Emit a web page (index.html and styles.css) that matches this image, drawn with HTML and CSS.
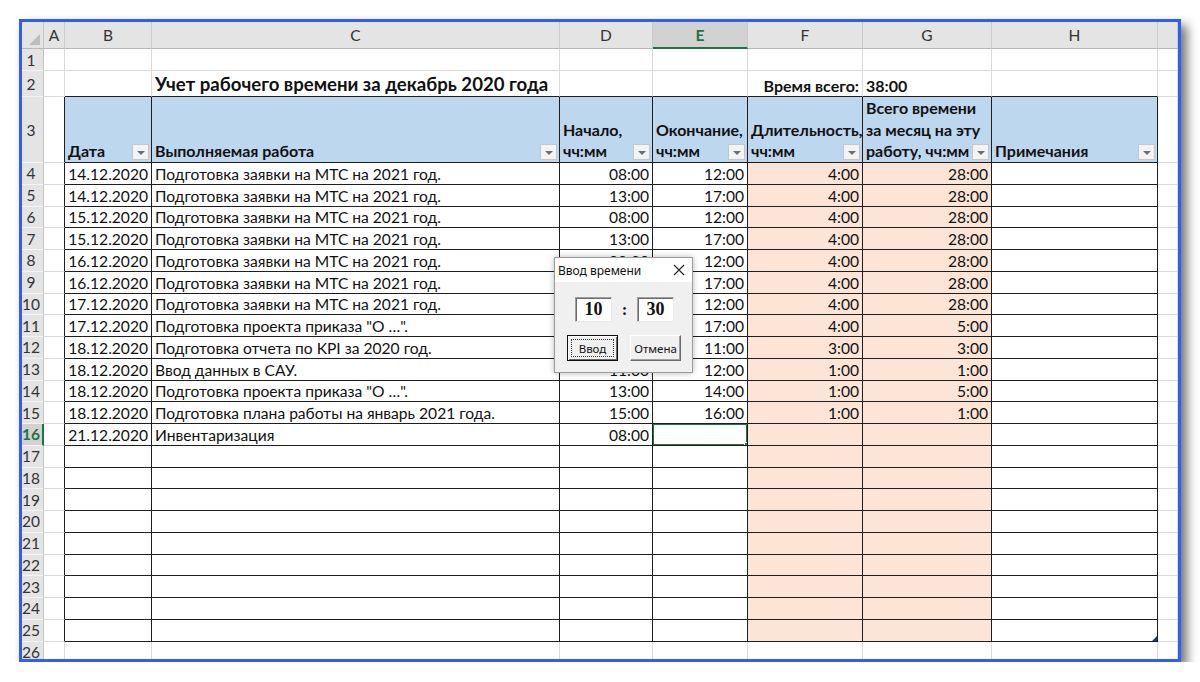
FILE: index.html
```html
<!DOCTYPE html>
<html lang="ru">
<head>
<meta charset="utf-8">
<title>Учет рабочего времени</title>
<link rel="stylesheet" href="styles.css">
</head>
<body>
<div class="frame">
<table class="sheet">
<colgroup>
<col class="c-rh"><col class="c-a"><col class="c-b"><col class="c-c"><col class="c-d"><col class="c-e"><col class="c-f"><col class="c-g"><col class="c-h"><col class="c-i">
</colgroup>
<tr class="r-head">
<th class="corner"><span class="corner-tri"></span></th><th>A</th><th>B</th><th>C</th><th>D</th><th class="sel">E</th><th>F</th><th>G</th><th>H</th><th></th>
</tr>
<tr class="r1"><td class="rh">1</td><td></td><td></td><td></td><td></td><td></td><td></td><td></td><td></td><td></td></tr>
<tr class="r2"><td class="rh">2</td><td></td><td class="bb"></td><td class="bb title">Учет рабочего времени за декабрь 2020 года</td><td class="bb"></td><td class="bb"></td><td class="bb bold right">Время всего:</td><td class="bb bold">38:00</td><td class="bb"></td><td></td></tr>
<tr class="r3"><td class="rh">3</td><td class="br"></td>
<td class="t hd"><div class="cell">Дата<span class="flt"></span></div></td>
<td class="t hd"><div class="cell">Выполняемая работа<span class="flt"></span></div></td>
<td class="t hd"><div class="cell">Начало,<br>чч:мм<span class="flt"></span></div></td>
<td class="t hd"><div class="cell">Окончание,<br>чч:мм<span class="flt"></span></div></td>
<td class="t hd"><div class="cell">Длительность,<br>чч:мм<span class="flt"></span></div></td>
<td class="t hd"><div class="cell">Всего времени<br>за месяц на эту<br>работу, чч:мм<span class="flt"></span></div></td>
<td class="t hd"><div class="cell">Примечания<span class="flt"></span></div></td>
<td></td></tr>
<tr class="rd"><td class="rh">4</td><td class="br"></td><td class="t right">14.12.2020</td><td class="t">Подготовка заявки на МТС на 2021 год.</td><td class="t right">08:00</td><td class="t right">12:00</td><td class="t p right">4:00</td><td class="t p right">28:00</td><td class="t"></td><td></td></tr>
<tr class="rd"><td class="rh">5</td><td class="br"></td><td class="t right">14.12.2020</td><td class="t">Подготовка заявки на МТС на 2021 год.</td><td class="t right">13:00</td><td class="t right">17:00</td><td class="t p right">4:00</td><td class="t p right">28:00</td><td class="t"></td><td></td></tr>
<tr class="rd"><td class="rh">6</td><td class="br"></td><td class="t right">15.12.2020</td><td class="t">Подготовка заявки на МТС на 2021 год.</td><td class="t right">08:00</td><td class="t right">12:00</td><td class="t p right">4:00</td><td class="t p right">28:00</td><td class="t"></td><td></td></tr>
<tr class="rd"><td class="rh">7</td><td class="br"></td><td class="t right">15.12.2020</td><td class="t">Подготовка заявки на МТС на 2021 год.</td><td class="t right">13:00</td><td class="t right">17:00</td><td class="t p right">4:00</td><td class="t p right">28:00</td><td class="t"></td><td></td></tr>
<tr class="rd"><td class="rh">8</td><td class="br"></td><td class="t right">16.12.2020</td><td class="t">Подготовка заявки на МТС на 2021 год.</td><td class="t right">08:00</td><td class="t right">12:00</td><td class="t p right">4:00</td><td class="t p right">28:00</td><td class="t"></td><td></td></tr>
<tr class="rd"><td class="rh">9</td><td class="br"></td><td class="t right">16.12.2020</td><td class="t">Подготовка заявки на МТС на 2021 год.</td><td class="t right">13:00</td><td class="t right">17:00</td><td class="t p right">4:00</td><td class="t p right">28:00</td><td class="t"></td><td></td></tr>
<tr class="rd"><td class="rh">10</td><td class="br"></td><td class="t right">17.12.2020</td><td class="t">Подготовка заявки на МТС на 2021 год.</td><td class="t right">08:00</td><td class="t right">12:00</td><td class="t p right">4:00</td><td class="t p right">28:00</td><td class="t"></td><td></td></tr>
<tr class="rd"><td class="rh">11</td><td class="br"></td><td class="t right">17.12.2020</td><td class="t">Подготовка проекта приказа "О …".</td><td class="t right">13:00</td><td class="t right">17:00</td><td class="t p right">4:00</td><td class="t p right">5:00</td><td class="t"></td><td></td></tr>
<tr class="rd"><td class="rh">12</td><td class="br"></td><td class="t right">18.12.2020</td><td class="t">Подготовка отчета по KPI за 2020 год.</td><td class="t right">08:00</td><td class="t right">11:00</td><td class="t p right">3:00</td><td class="t p right">3:00</td><td class="t"></td><td></td></tr>
<tr class="rd"><td class="rh">13</td><td class="br"></td><td class="t right">18.12.2020</td><td class="t">Ввод данных в САУ.</td><td class="t right">11:00</td><td class="t right">12:00</td><td class="t p right">1:00</td><td class="t p right">1:00</td><td class="t"></td><td></td></tr>
<tr class="rd"><td class="rh">14</td><td class="br"></td><td class="t right">18.12.2020</td><td class="t">Подготовка проекта приказа "О …".</td><td class="t right">13:00</td><td class="t right">14:00</td><td class="t p right">1:00</td><td class="t p right">5:00</td><td class="t"></td><td></td></tr>
<tr class="rd"><td class="rh">15</td><td class="br"></td><td class="t right">18.12.2020</td><td class="t">Подготовка плана работы на январь 2021 года.</td><td class="t right">15:00</td><td class="t right">16:00</td><td class="t p right">1:00</td><td class="t p right">1:00</td><td class="t"></td><td></td></tr>
<tr class="rd"><td class="rh rsel">16</td><td class="br"></td><td class="t right">21.12.2020</td><td class="t">Инвентаризация</td><td class="t right">08:00</td><td class="t active"><span class="selbox"><span class="handle"></span></span></td><td class="t p"></td><td class="t p"></td><td class="t"></td><td></td></tr>
<tr class="rd"><td class="rh">17</td><td class="br"></td><td class="t"></td><td class="t"></td><td class="t"></td><td class="t"></td><td class="t p"></td><td class="t p"></td><td class="t"></td><td></td></tr>
<tr class="rd"><td class="rh">18</td><td class="br"></td><td class="t"></td><td class="t"></td><td class="t"></td><td class="t"></td><td class="t p"></td><td class="t p"></td><td class="t"></td><td></td></tr>
<tr class="rd"><td class="rh">19</td><td class="br"></td><td class="t"></td><td class="t"></td><td class="t"></td><td class="t"></td><td class="t p"></td><td class="t p"></td><td class="t"></td><td></td></tr>
<tr class="rd"><td class="rh">20</td><td class="br"></td><td class="t"></td><td class="t"></td><td class="t"></td><td class="t"></td><td class="t p"></td><td class="t p"></td><td class="t"></td><td></td></tr>
<tr class="rd"><td class="rh">21</td><td class="br"></td><td class="t"></td><td class="t"></td><td class="t"></td><td class="t"></td><td class="t p"></td><td class="t p"></td><td class="t"></td><td></td></tr>
<tr class="rd"><td class="rh">22</td><td class="br"></td><td class="t"></td><td class="t"></td><td class="t"></td><td class="t"></td><td class="t p"></td><td class="t p"></td><td class="t"></td><td></td></tr>
<tr class="rd"><td class="rh">23</td><td class="br"></td><td class="t"></td><td class="t"></td><td class="t"></td><td class="t"></td><td class="t p"></td><td class="t p"></td><td class="t"></td><td></td></tr>
<tr class="rd"><td class="rh">24</td><td class="br"></td><td class="t"></td><td class="t"></td><td class="t"></td><td class="t"></td><td class="t p"></td><td class="t p"></td><td class="t"></td><td></td></tr>
<tr class="rd"><td class="rh">25</td><td class="br"></td><td class="t"></td><td class="t"></td><td class="t"></td><td class="t"></td><td class="t p"></td><td class="t p"></td><td class="t corner-end"><span class="resize"></span></td><td></td></tr>
<tr class="r26"><td class="rh">26</td><td></td><td></td><td></td><td></td><td></td><td></td><td></td><td></td><td></td></tr>
</table>

<div class="dialog">
  <div class="dlg-title">
    <span>Ввод времени</span>
    <svg class="dlg-close" width="12" height="12" viewBox="0 0 12 12"><path d="M1 1L11 11M11 1L1 11" stroke="#222" stroke-width="1.1" fill="none"/></svg>
  </div>
  <div class="dlg-body">
    <div class="dlg-inputs">
      <span class="tb">10</span>
      <span class="colon">:</span>
      <span class="tb">30</span>
    </div>
    <div class="dlg-buttons">
      <span class="btn btn-default"><span class="focus">Ввод</span></span>
      <span class="btn">Отмена</span>
    </div>
  </div>
</div>
</div>
</body>
</html>
```

FILE: styles.css
```css
* { box-sizing: border-box; }
body {
  margin: 0;
  padding: 19px 0 0 19px;
  background: #fff;
  font-family: Lato, "Noto Sans", sans-serif;
  color: #111;
}
.frame {
  position: relative;
  width: 1162px;
  height: 643px;
  border: 3px solid #2f5ff2;
  box-shadow: 6px 6px 10px rgba(0, 0, 0, 0.55);
  overflow: hidden;
  background: #fff;
}
.sheet {
  border-collapse: separate;
  border-spacing: 0;
  table-layout: fixed;
  width: 1156px;
}
.c-rh { width: 22px; }
.c-a { width: 21px; }
.c-b { width: 87px; }
.c-c { width: 408px; }
.c-d { width: 93px; }
.c-e { width: 95px; }
.c-f { width: 115px; }
.c-g { width: 129px; }
.c-h { width: 166px; }
.c-i { width: 20px; }

.sheet th, .sheet td {
  padding: 0 3px;
  border-right: 1px solid #dadada;
  border-bottom: 1px solid #dadada;
  white-space: nowrap;
  overflow: hidden;
  font-size: 15.6px;
  font-weight: 400;
  line-height: 20px;
  vertical-align: bottom;
  text-align: left;
}
.r-head { height: 27px; }
.r-head th {
  background: #e4e4e4;
  color: #333;
  text-align: center;
  vertical-align: middle;
  border-right: 1px solid #c9c9c9;
  border-bottom: 1px solid #b8b8b8;
  font-size: 15.5px;
}
.r-head th.sel {
  background: #d2d2d2;
  color: #217346;
  font-weight: 700;
  border-bottom: 2px solid #217346;
}
.corner { position: relative; }
.corner-tri {
  position: absolute;
  right: 3px;
  bottom: 3px;
  width: 0;
  height: 0;
  border-left: 11px solid transparent;
  border-bottom: 11px solid #bdbdbd;
}
.sheet td.rh {
  background: #e4e4e4;
  color: #333;
  text-align: center;
  padding: 0 3px 0 0;
  border-right: 1px solid #c4c4c4;
  border-bottom: 1px solid #f4f4f4;
  vertical-align: middle;
  font-size: 15.5px;
}
.sheet td.rsel {
  background: #d2d2d2;
  color: #217346;
  font-weight: 700;
  border-right: 2px solid #217346;
}
.r1 { height: 22px; }
.r2 { height: 26px; }
.r3 { height: 66px; }
.rd { height: 21.75px; }
.r26 { height: 20px; }

.sheet td.bb { border-bottom: 1px solid #1e1e1e; }
.sheet td.br { border-right: 1px solid #1e1e1e; }
.sheet td.t {
  border-right: 1px solid #1e1e1e;
  border-bottom: 1px solid #1e1e1e;
}
.sheet td.title {
  font-size: 18.6px;
  font-weight: 700;
  overflow: visible;
  line-height: 24px;
}
.bold { font-weight: 700 !important; font-size: 16px !important; }
.right { text-align: right !important; }
.sheet td.p { background: #fce4d6; }
.sheet td.hd {
  background: #bdd7ee;
  font-weight: 700;
  font-size: 16px;
  padding: 0;
  white-space: normal;
}
.cell {
  position: relative;
  padding: 0 3px 0 3px;
  line-height: 21.7px;
  white-space: nowrap;
}
.flt {
  position: absolute;
  right: 2px;
  bottom: 2px;
  width: 17px;
  height: 16px;
  background: #f3f3f3;
  border: 1px solid #c6c6c6;
}
.flt::after {
  content: "";
  position: absolute;
  left: 4px;
  top: 6px;
  border-left: 4px solid transparent;
  border-right: 4px solid transparent;
  border-top: 4px solid #6e6e6e;
}
.sheet td.active { position: relative; padding: 0; }
.selbox {
  position: absolute;
  left: -1px;
  top: -1px;
  right: -1px;
  bottom: -1px;
  border: 2px solid #217346;
}
.handle {
  position: absolute;
  right: -4px;
  bottom: -4px;
  width: 6px;
  height: 6px;
  background: #217346;
  border: 1px solid #fff;
}
.sheet td.corner-end { position: relative; }
.resize {
  position: absolute;
  right: 0;
  bottom: 0;
  width: 0;
  height: 0;
  border-left: 5px solid transparent;
  border-bottom: 5px solid #1f3a93;
}

/* dialog */
.dialog {
  position: absolute;
  left: 532px;
  top: 235px;
  width: 139px;
  height: 116px;
  background: #f0f0f0;
  border: 1px solid #9a9a9a;
  box-shadow: 0 0 6px rgba(0, 0, 0, 0.28);
  font-family: "Noto Sans", "DejaVu Sans", sans-serif;
  color: #111;
  display: flex;
  flex-direction: column;
}
.dlg-title {
  height: 24px;
  background: #fff;
  display: flex;
  align-items: center;
  justify-content: space-between;
  padding: 0 7px 0 3px;
  font-size: 12px;
}
.dlg-body {
  flex: 1;
  padding-top: 15px;
}
.dlg-inputs {
  display: flex;
  align-items: center;
  padding-left: 20px;
  height: 25px;
}
.tb {
  width: 37px;
  height: 25px;
  background: #fff;
  border: 1px solid;
  border-color: #a0a0a0 #e8e8e8 #e8e8e8 #a0a0a0;
  box-shadow: inset 1px 1px 0 #6a6a6a;
  font-family: "Liberation Serif", serif;
  font-weight: 700;
  font-size: 18px;
  line-height: 23px;
  text-align: center;
}
.colon {
  width: 25px;
  text-align: center;
  font-family: "Liberation Serif", serif;
  font-weight: 700;
  font-size: 17px;
}
.dlg-buttons {
  display: flex;
  gap: 12px;
  padding-left: 12px;
  margin-top: 13px;
}
.btn {
  width: 51px;
  height: 26px;
  background: #f0f0f0;
  border: 1px solid;
  border-color: #fff #6a6a6a #6a6a6a #fff;
  box-shadow: inset -1px -1px 0 #a0a0a0;
  font-size: 11.5px;
  display: flex;
  align-items: center;
  justify-content: center;
}
.btn-default {
  border: 1px solid #111;
  box-shadow: inset 1px 1px 0 #fff, inset -1px -1px 0 #6a6a6a;
  padding: 3px;
}
.focus {
  width: 100%;
  height: 100%;
  border: 1px dotted #333;
  display: flex;
  align-items: center;
  justify-content: center;
}
```
